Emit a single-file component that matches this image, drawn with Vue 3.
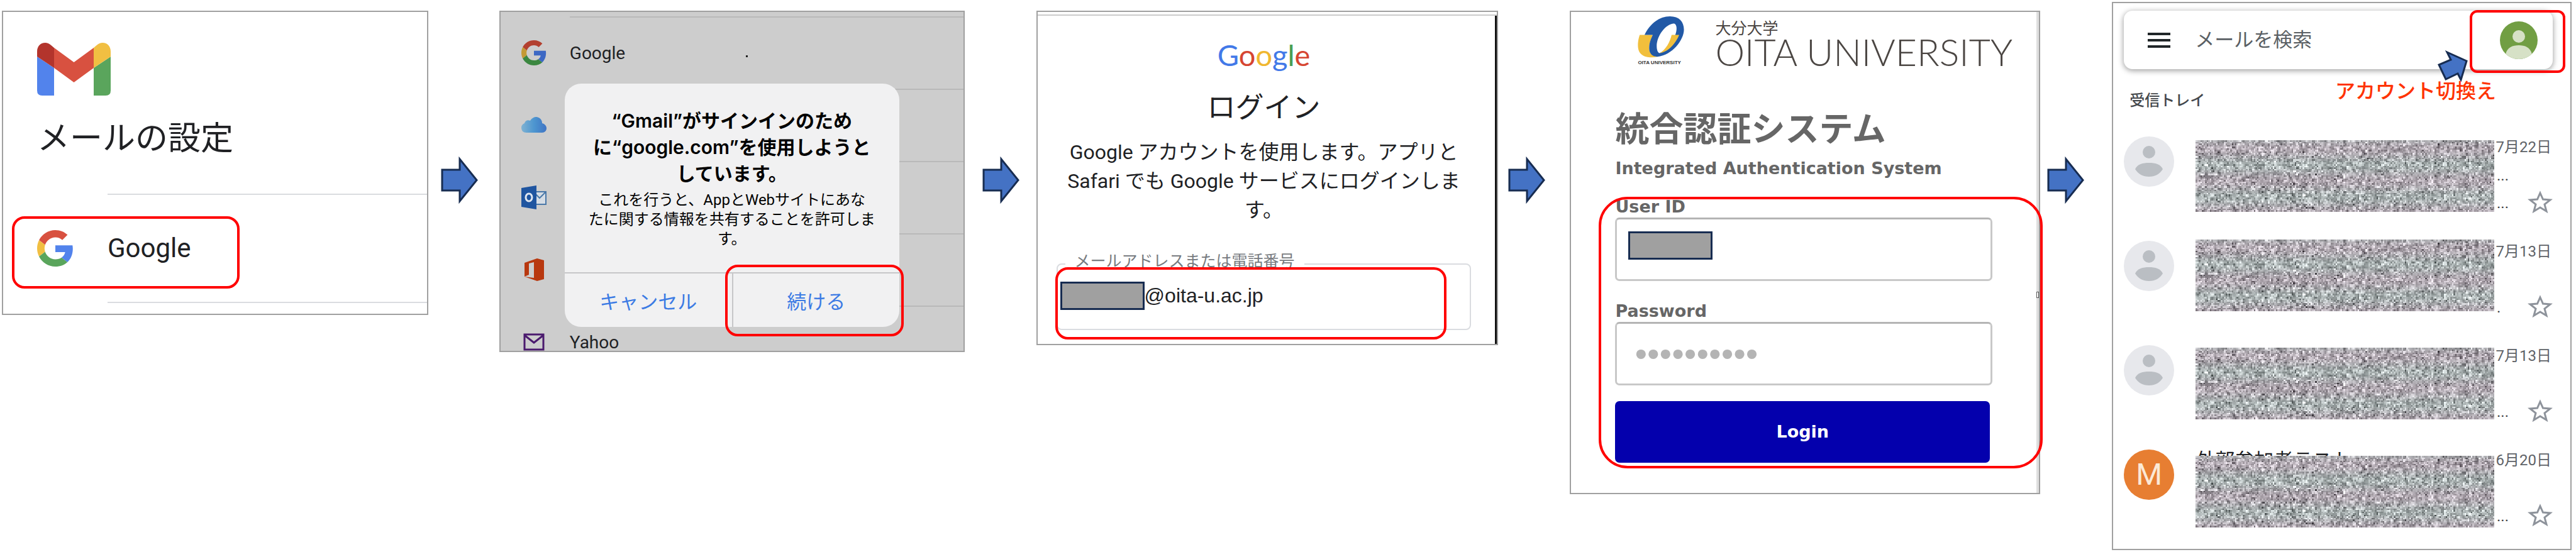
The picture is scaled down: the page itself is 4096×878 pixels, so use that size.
<template>
  <main class="steps">
    <!-- 1. アカウントの種類を選ぶ -->
    <section class="panel setup">
      <svg class="gmail-logo" viewBox="0 0 117 84" aria-hidden="true">
        <path fill="#5283ec" d="M0 22 27 40V84H8Q0 84 0 76Z" />
        <path fill="#5aa55c" d="M90 40 117 22V76Q117 84 109 84H90Z" />
        <path fill="#d85140" d="M27 8 58.5 31 90 8V40L58.5 63 27 40Z" />
        <path fill="#b3342c" d="M27 40 0 22V14C0 6 5 0 13 0 19 0 22 4 27 8Z" />
        <path fill="#f1bf42" d="M90 40 117 22V14C117 6 112 0 104 0 98 0 95 4 90 8Z" />
      </svg>
      <h1>メールの設定</h1>
      <div class="provider">
        <svg class="g-icon" viewBox="0 0 48 48" aria-hidden="true">
          <path v-for="p in googleG" :key="p.fill" :fill="p.fill" :d="p.d" />
        </svg>
        <a href="#" class="provider-name">Google</a>
        <span class="frame"></span>
      </div>
    </section>

    <svg class="arrow" viewBox="0 0 59 75" aria-hidden="true">
      <path d="M2 21H30V4L57 37.500 30 71V54H2Z" />
    </svg>

    <!-- 2. サインインの確認 -->
    <section class="panel confirm">
      <ul class="accounts">
        <li>
          <span class="account-icon">
            <svg width="40" height="40" viewBox="0 0 48 48" aria-hidden="true">
              <path v-for="p in googleGDim" :key="p.fill" :fill="p.fill" :d="p.d" />
            </svg>
          </span>
          <span class="account-name">Google</span>
        </li>
        <li>
          <span class="account-icon">
            <svg width="40" height="26" viewBox="0 0 40 26" aria-hidden="true">
              <defs>
                <linearGradient id="cloud">
                  <stop offset="0" stop-color="#7fb2d2" />
                  <stop offset="0.500" stop-color="#4d96d0" />
                  <stop offset="1" stop-color="#3f74c4" />
                </linearGradient>
              </defs>
              <path fill="url(#cloud)" d="M8 25C3 25 0 22 0 17 0 13 3 11 5 10 6 6 10 4 14 6 17 1 21 0 24 0 30 1 33 5 33 10 37 11 40 14 40 18 40 22 37 25 33 25Z" />
            </svg>
          </span>
          <span class="account-name"></span>
        </li>
        <li>
          <span class="account-icon">
            <svg width="40" height="38" viewBox="0 0 40 38" aria-hidden="true">
              <path fill="#d6dde5" stroke="#4a78a8" stroke-width="2" d="M22 10H39V30H22Z" />
              <path fill="none" stroke="#4a78a8" stroke-width="2" d="M23 14 29 20 38 11" />
              <path fill="#1f55a0" d="M0 4 24 0V38L0 34Z" />
              <ellipse cx="12" cy="19" rx="5" ry="6" fill="none" stroke="#dfe6f0" stroke-width="3" />
            </svg>
          </span>
          <span class="account-name"></span>
        </li>
        <li>
          <span class="account-icon">
            <svg width="40" height="36" viewBox="0 0 40 36" aria-hidden="true">
              <path fill="#b8380f" d="M5 7 25 0 36 3V33L25 36 5 29 20 31V6L12 8V26L5 29Z" />
            </svg>
          </span>
          <span class="account-name"></span>
        </li>
        <li>
          <span class="account-icon">
            <svg width="40" height="28" viewBox="0 0 40 28" aria-hidden="true">
              <path fill="none" stroke="#4b1a6e" stroke-width="3" d="M5 2H35V26H5ZM6 4 20 15 34 4" />
            </svg>
          </span>
          <span class="account-name">Yahoo</span>
        </li>
      </ul>
      <span class="speck"></span>
      <div class="dialog" role="dialog" aria-labelledby="dialog-title">
        <h2 id="dialog-title">“Gmail”がサインインのため<br />に“google.com”を使用しようと<br />しています。</h2>
        <p>これを行うと、AppとWebサイトにあな<br />たに関する情報を共有することを許可しま<br />す。</p>
        <div class="dialog-actions">
          <button type="button">キャンセル</button>
          <button type="button">続ける</button>
          <span class="frame"></span>
        </div>
      </div>
    </section>

    <svg class="arrow" viewBox="0 0 59 75" aria-hidden="true">
      <path d="M2 21H30V4L57 37.500 30 71V54H2Z" />
    </svg>

    <!-- 3. Googleログイン -->
    <section class="panel google">
      <div class="google-logo">
        <span class="blue">G</span><span class="red">o</span><span class="yellow">o</span><span class="blue">g</span><span class="green">l</span><span class="red">e</span>
      </div>
      <h2>ログイン</h2>
      <p>Google アカウントを使用します。アプリと<br />Safari でも Google サービスにログインしま<br />す。</p>
      <div class="email-field">
        <fieldset>
          <legend><label for="email">メールアドレスまたは電話番号</label></legend>
          <div class="email-row">
            <span class="mask"></span>
            <input id="email" v-model="email" type="text" />
          </div>
        </fieldset>
        <span class="frame"></span>
      </div>
    </section>

    <svg class="arrow" viewBox="0 0 59 75" aria-hidden="true">
      <path d="M2 21H30V4L57 37.500 30 71V54H2Z" />
    </svg>

    <!-- 4. 統合認証 -->
    <section class="panel oita">
      <header class="brand">
        <div class="emblem">
          <svg viewBox="76 30 352 318" aria-hidden="true">
            <path fill="#f1bf3c" d="M92 175H190C175 215 163 240 163 275 163 315 190 338 228 341 150 355 78 340 78 255 78 220 86 190 92 175Z" />
            <path fill="#2259a6" fill-rule="evenodd" d="M128 175C170 90 240 35 320 35 390 35 425 75 426 135 427 210 340 330 225 340 180 340 163 310 163 275 163 230 180 200 190 175ZM345 90C290 95 220 180 220 260 220 300 235 313 240 313 300 290 375 190 370 120 368 100 360 88 345 90Z" />
            <path fill="#f1bf3c" d="M333 175H390C370 225 320 300 242 314 290 285 320 230 333 175Z" />
          </svg>
          <small>OITA UNIVERSITY</small>
        </div>
        <div class="brand-name">
          <span class="brand-ja">大分大学</span>
          <span class="brand-en">OITA UNIVERSITY</span>
        </div>
      </header>
      <h1>統合認証システム</h1>
      <h2>Integrated Authentication System</h2>
      <form @submit.prevent>
        <label for="user">User ID</label>
        <div class="box">
          <span class="mask"></span>
          <input id="user" v-model="userId" type="text" />
        </div>
        <label for="password">Password</label>
        <input id="password" v-model="password" class="box" type="password" />
        <button type="submit">Login</button>
        <span class="frame"></span>
      </form>
      <span class="edge-mark"></span>
    </section>

    <svg class="arrow" viewBox="0 0 59 75" aria-hidden="true">
      <path d="M2 21H30V4L57 37.500 30 71V54H2Z" />
    </svg>

    <!-- 5. 受信トレイ -->
    <section class="panel inbox">
      <div class="search">
        <button type="button" class="menu" aria-label="メニュー"><i></i><i></i><i></i></button>
        <input v-model="query" type="text" placeholder="メールを検索" aria-label="メールを検索" />
        <button type="button" class="profile" aria-label="アカウント">
          <svg viewBox="0 0 60 60" aria-hidden="true">
            <defs>
              <clipPath id="round"><circle cx="30" cy="30" r="30" /></clipPath>
            </defs>
            <circle cx="30" cy="30" r="30" fill="#719e43" />
            <g clip-path="url(#round)" fill="#d6e1c6">
              <circle cx="30" cy="24" r="10" />
              <path d="M9 52C12 41 20 38 30 38S48 41 51 52L45 60H15Z" />
            </g>
          </svg>
        </button>
        <span class="frame"></span>
        <svg class="pointer" viewBox="0 0 48 50" aria-hidden="true">
          <path d="M15 3 46 17 37 47 32 37 13 46 2 23 21 15Z" />
        </svg>
        <strong class="note">アカウント切換え</strong>
      </div>
      <h3>受信トレイ</h3>
      <ul class="mails">
        <li v-for="(mail, i) in mails" :key="i">
          <span v-if="mail.initial" class="avatar initial">{{ mail.initial }}</span>
          <svg v-else class="avatar" viewBox="0 0 80 80" aria-hidden="true">
            <circle cx="40" cy="40" r="40" fill="#e7e8ec" />
            <circle cx="40" cy="25" r="10" fill="#babec3" />
            <path fill="#babec3" d="M18 52C22 44 30 42 40 42S58 44 62 52C57 60 50 64 40 64S23 60 18 52Z" />
          </svg>
          <div class="content">
            <span class="subject">{{ mail.subject }}</span>
            <canvas ref="grains" width="190" height="45" :style="{ top: mail.maskTop + 'px' }"></canvas>
          </div>
          <div class="meta">
            <time>{{ mail.date }}</time>
            <span class="dots">{{ mail.second }}</span>
            <div class="last">
              <span class="dots">{{ mail.third }}</span>
              <button type="button" aria-label="スター">
                <svg viewBox="0 0 40 36" aria-hidden="true">
                  <path d="M20 4 24.500 14 36 15 27 22 30 33 20 27 10 33 13 22 4 15 15.500 14Z" />
                </svg>
              </button>
            </div>
          </div>
        </li>
      </ul>
    </section>
  </main>
</template>

<script setup>
import { ref, onMounted } from "vue";

const email = ref("@oita-u.ac.jp");
const userId = ref("");
const password = ref("0123456789");
const query = ref("");
const grains = ref([]);

const gPaths = [
  "M24 9.5c3.540 0 6.710 1.220 9.210 3.600l6.850-6.850C35.900 2.380 30.470 0 24 0 14.620 0 6.510 5.380 2.560 13.220l7.980 6.190C12.430 13.720 17.740 9.500 24 9.500z",
  "M46.980 24.550c0-1.570-.150-3.090-.380-4.550H24v9.020h12.940c-.580 2.960-2.260 5.480-4.780 7.180l7.730 6c4.510-4.180 7.090-10.360 7.090-17.650z",
  "M10.530 28.590c-.480-1.450-.760-2.990-.760-4.590s.270-3.140.760-4.590l-7.980-6.190C.920 16.460 0 20.120 0 24c0 3.880.920 7.540 2.560 10.780l7.970-6.190z",
  "M24 48c6.480 0 11.930-2.130 15.890-5.810l-7.730-6c-2.150 1.450-4.920 2.300-8.160 2.300-6.260 0-11.570-4.220-13.470-9.910l-7.980 6.190C6.510 42.620 14.620 48 24 48z",
];
const paint = (colors) => gPaths.map((d, i) => ({ d, fill: colors[i] }));
const googleG = paint(["#d85140", "#5283ec", "#f1bf42", "#5aa55c"]);
const googleGDim = paint(["#b3402f", "#3d68c4", "#c49a35", "#3b8740"]);

const mails = [
  { date: "7月22日", subject: "", second: "...", third: "...", maskTop: 6 },
  { date: "7月13日", subject: "", second: "", third: ".", maskTop: -2 },
  { date: "7月13日", subject: "", second: "", third: "...", maskTop: 4 },
  { date: "6月20日", subject: "外部参加者テスト", second: "", third: "...", maskTop: 10, initial: "M" },
];

// 本文を隠す砂目模様（毎回同じ模様になるよう固定の乱数を使う）
const drawGrain = (canvas) => {
  const ctx = canvas.getContext("2d");
  const { width, height } = canvas;
  const image = ctx.createImageData(width, height);
  let seed = 20240722;
  const random = () => {
    seed = (seed * 1664525 + 1013904223) % 4294967296;
    return seed / 4294967296;
  };
  // 粗い粒を下地にして細かい粒を重ねる
  const coarse = Array.from({ length: width * height }, () => random() - 0.5);
  for (let y = 0; y < height; y++) {
    const tint = Math.sin(y / 3.2) * 4;
    for (let x = 0; x < width; x++) {
      const base = coarse[(y >> 1) * width + (x >> 1)] * 60;
      const value = 174 + base + (random() + random() - 1) * 64;
      const dark = random() < 0.04 ? 50 : 0;
      const at = (y * width + x) * 4;
      image.data[at] = value - dark + tint;
      image.data[at + 1] = value - dark - tint;
      image.data[at + 2] = value - dark + 4;
      image.data[at + 3] = 255;
    }
  }
  ctx.putImageData(image, 0, 0);
};

onMounted(() => grains.value.forEach(drawGrain));
</script>

<style>
body {
  margin: 0;
  background: #fff;
}
</style>

<style scoped>
* {
  box-sizing: border-box;
}

.steps {
  display: grid;
  grid-template-columns:
    minmax(0, 678fr) 20px 59px 34px
    minmax(0, 740fr) 28px 59px 27px
    minmax(0, 735fr) 16px 59px 39px
    minmax(0, 748fr) 11px 59px 44px
    minmax(0, 731fr);
  align-items: start;
  padding: 3px 7px 3px 3px;
  font-family: Roboto, "Noto Sans CJK JP", sans-serif;
  color: #202124;
}

h1, h2, h3, p, ul {
  margin: 0;
  padding: 0;
  font-weight: 400;
}

ul {
  list-style: none;
}

button, input {
  font: inherit;
  color: inherit;
  border: none;
  outline: none;
  padding: 0;
  margin: 0;
  background: transparent;
  min-width: 0;
}

button {
  cursor: pointer;
}

svg {
  display: block;
}

.panel {
  position: relative;
  margin-top: 14px;
  border: 2px solid #a0a0a0;
  background: #fff;
}

.panel:nth-child(1) { grid-column: 1; }
.panel:nth-child(3) { grid-column: 5; }
.panel:nth-child(5) { grid-column: 9; }
.panel:nth-child(7) { grid-column: 13; }
.panel:nth-child(9) { grid-column: 17; }
.arrow:nth-child(2) { grid-column: 3; }
.arrow:nth-child(4) { grid-column: 7; }
.arrow:nth-child(6) { grid-column: 11; }
.arrow:nth-child(8) { grid-column: 15; }

.panel, .arrow {
  grid-row: 1;
}

.arrow {
  width: 100%;
  margin-top: 246px;
}

.arrow path, .pointer path {
  fill: #4472c4;
  stroke: #172c51;
  stroke-width: 3;
}

.frame {
  position: absolute;
  border: 4px solid #f00;
  border-radius: 20px;
  pointer-events: none;
}

.mask {
  flex: none;
  width: 134px;
  height: 45px;
  border: 3px solid #172c51;
  background: #a0a0a0;
}

/* 1 */
.setup {
  padding: 49px 0 17px;
}

.gmail-logo {
  width: 117px;
  margin-left: 54px;
}

.setup h1 {
  margin: 39px 0 57px 54px;
  font-size: 52px;
  line-height: 60px;
}

.provider {
  position: relative;
  display: flex;
  align-items: center;
}

.g-icon {
  width: 58px;
  margin: 0 54px;
}

.provider-name {
  flex: 1;
  border: solid #dadce0;
  border-width: 2px 0;
  padding: 55px 0;
  font-size: 42px;
  line-height: 60px;
  color: inherit;
  text-decoration: none;
}

.provider .frame {
  left: 14px;
  top: 36px;
  width: 362px;
  height: 115px;
}

/* 2 */
.confirm {
  background: #cdcdcd;
}

.accounts {
  height: 539px;
  padding-top: 7px;
}

.accounts li {
  display: flex;
  align-items: center;
  height: 115px;
}

.account-icon {
  width: 110px;
  padding-left: 33px;
}

.account-name {
  flex: 1;
  align-self: stretch;
  border-top: 2px solid #b9b9b9;
  font-size: 28px;
  line-height: 114px;
}

.speck {
  position: absolute;
  left: 390px;
  top: 69px;
  width: 3px;
  height: 3px;
  background: #222;
}

.dialog {
  position: absolute;
  left: 102px;
  right: 102px;
  top: 114px;
  padding-top: 38px;
  border-radius: 26px;
  background: #f1f1f2;
  color: #000;
  text-align: center;
}

.dialog h2 {
  font-family: Inter, "Noto Sans CJK JP", sans-serif;
  font-size: 30px;
  line-height: 42px;
  font-weight: 600;
}

.dialog p {
  margin: 6px 0 37px;
  font-size: 24px;
  line-height: 31px;
}

.dialog-actions {
  position: relative;
  display: grid;
  grid-template-columns: 1fr 1fr;
  border-top: 2px solid #c6c6c8;
}

.dialog-actions button {
  height: 85px;
  font-size: 31px;
  color: #3c7be4;
}

.dialog-actions button + button {
  border-left: 2px solid #c6c6c8;
}

.dialog-actions .frame {
  left: 48%;
  right: -7px;
  top: -14px;
  bottom: -15px;
}

/* 3 */
.google {
  padding: 2px 41px 22px 30px;
  box-shadow: inset 0 4px #fff, inset 0 6px #ccc, inset -3px 0 #111;
  text-align: center;
}

.google-logo {
  margin-top: 36px;
  font-family: Lato, sans-serif;
  font-size: 47px;
  line-height: 60px;
}

.blue { color: #4279e8; }
.red { color: #d64531; }
.yellow { color: #f0b72f; }
.green { color: #479f53; }

.google h2 {
  margin-top: 25px;
  font-size: 45px;
  line-height: 60px;
}

.google p {
  margin: 17px -4px 0;
  font-size: 32px;
  line-height: 46px;
  white-space: nowrap;
}

.email-field {
  position: relative;
  margin-top: 46px;
}

fieldset {
  margin: 0;
  padding: 0 4px 30px;
  border: 2px solid #dadce0;
  border-radius: 8px;
  text-align: left;
}

legend {
  margin-left: 8px;
  padding: 0 15px 8px;
  font-size: 25px;
  line-height: 26px;
  color: #777b80;
}

.email-row {
  display: flex;
  align-items: center;
  padding-top: 11px;
}

.email-row input {
  flex: 1;
  font-family: "Liberation Sans", sans-serif;
  font-size: 32px;
}

.email-field .frame {
  left: -2px;
  right: 39px;
  top: 22px;
  height: 115px;
}

/* 4 */
.oita {
  padding: 6px 74px 48px 70px;
  box-shadow: inset -4px 0 #dedede;
  color: #666;
}

.brand {
  display: flex;
  gap: 49px;
  padding-left: 36px;
}

.emblem {
  flex: none;
  width: 74px;
}

.emblem small {
  display: block;
  font-family: "Liberation Sans", sans-serif;
  font-size: 8px;
  line-height: 16px;
  font-weight: 700;
  white-space: nowrap;
  color: #333;
}

.brand-name {
  display: flex;
  flex-direction: column;
  padding-top: 6px;
  white-space: nowrap;
  color: #4b4643;
}

.brand-ja {
  font-size: 25px;
  line-height: 30px;
}

.brand-en {
  font-family: Lato, sans-serif;
  font-size: 59px;
  line-height: 44px;
  font-weight: 300;
}

.oita h1 {
  margin-top: 67px;
  font-size: 54px;
  line-height: 64px;
  font-weight: 700;
}

.oita h2, .oita label, .oita form button {
  font-family: "DejaVu Sans", sans-serif;
  font-size: 27px;
  line-height: 34px;
  font-weight: 700;
}

.oita h2 {
  margin-top: 12px;
  white-space: nowrap;
}

.oita form {
  position: relative;
  display: flex;
  flex-direction: column;
  margin-top: 27px;
}

.box {
  display: flex;
  height: 101px;
  margin: 0 0 31px;
  padding: 19px 18px;
  border: 3px solid #c8c8c8;
  border-top-color: #b4b4b4;
  border-radius: 7px;
}

.box input {
  flex: 1;
}

input.box {
  margin-bottom: 25px;
  padding: 0 28px;
  font-family: "Liberation Sans", sans-serif;
  font-size: 56px;
  color: #b4b4b4;
}

.oita form button {
  height: 98px;
  margin-right: 4px;
  border-radius: 7px;
  background: #0400ad;
  color: #fff;
}

.oita form .frame {
  left: -26px;
  right: -80px;
  top: 1px;
  bottom: -9px;
  border-radius: 46px;
}

.edge-mark {
  position: absolute;
  right: 0;
  top: 445px;
  width: 4px;
  height: 10px;
  border: 1px solid #555;
  background: #fff;
}

/* 5 */
.inbox {
  margin-top: 0;
  padding: 12px 28px 34px 17px;
}

.search {
  position: relative;
  display: flex;
  align-items: center;
  gap: 39px;
  height: 93px;
  padding: 0 24px 0 38px;
  border-radius: 14px;
  box-shadow: 0 2px 8px 1px rgba(0, 0, 0, 0.35);
}

.menu {
  display: flex;
  flex-direction: column;
  gap: 6px;
  width: 36px;
}

.menu i {
  height: 4px;
  background: #202628;
}

.search input {
  flex: 1;
  font-size: 31px;
  color: #5a5f64;
}

.search input::placeholder {
  color: #5a5f64;
}

.profile {
  width: 60px;
}

.search .frame {
  right: -20px;
  top: -1px;
  width: 152px;
  height: 100px;
  border-radius: 12px;
}

.pointer {
  position: absolute;
  right: 135px;
  top: 63px;
  width: 48px;
}

.note {
  position: absolute;
  right: 90px;
  top: 108px;
  font-size: 32px;
  line-height: 40px;
  font-weight: 500;
  color: #ff3300;
}

.inbox h3 {
  margin: 32px 0 39px 9px;
  font-size: 24px;
  line-height: 36px;
  font-weight: 500;
  color: #44484c;
}

.mails {
  display: flex;
  flex-direction: column;
  gap: 42px;
}

.mails li {
  display: flex;
  height: 124px;
}

.avatar {
  flex: none;
  width: 80px;
  height: 80px;
  margin-right: 34px;
}

.initial {
  border-radius: 50%;
  background: #e77e32;
  font-size: 48px;
  line-height: 80px;
  text-align: center;
  color: #fbe9d6;
}

.content {
  position: relative;
  flex: 1;
}

.subject {
  font-size: 31px;
  line-height: 36px;
}

.content canvas {
  position: absolute;
  left: 0;
  width: 100%;
  height: 114px;
  image-rendering: pixelated;
}

.meta {
  display: flex;
  flex-direction: column;
  width: 93px;
  font-size: 24px;
  color: #5f6368;
}

.meta time {
  padding-right: 2px;
  line-height: 34px;
  text-align: right;
  white-space: nowrap;
}

.dots {
  padding-left: 4px;
  height: 44px;
  line-height: 56px;
  color: #3c4043;
}

.last {
  display: flex;
  justify-content: space-between;
}

.last svg {
  width: 40px;
  margin-top: 8px;
  fill: none;
  stroke: #8e939b;
  stroke-width: 3;
}
</style>
